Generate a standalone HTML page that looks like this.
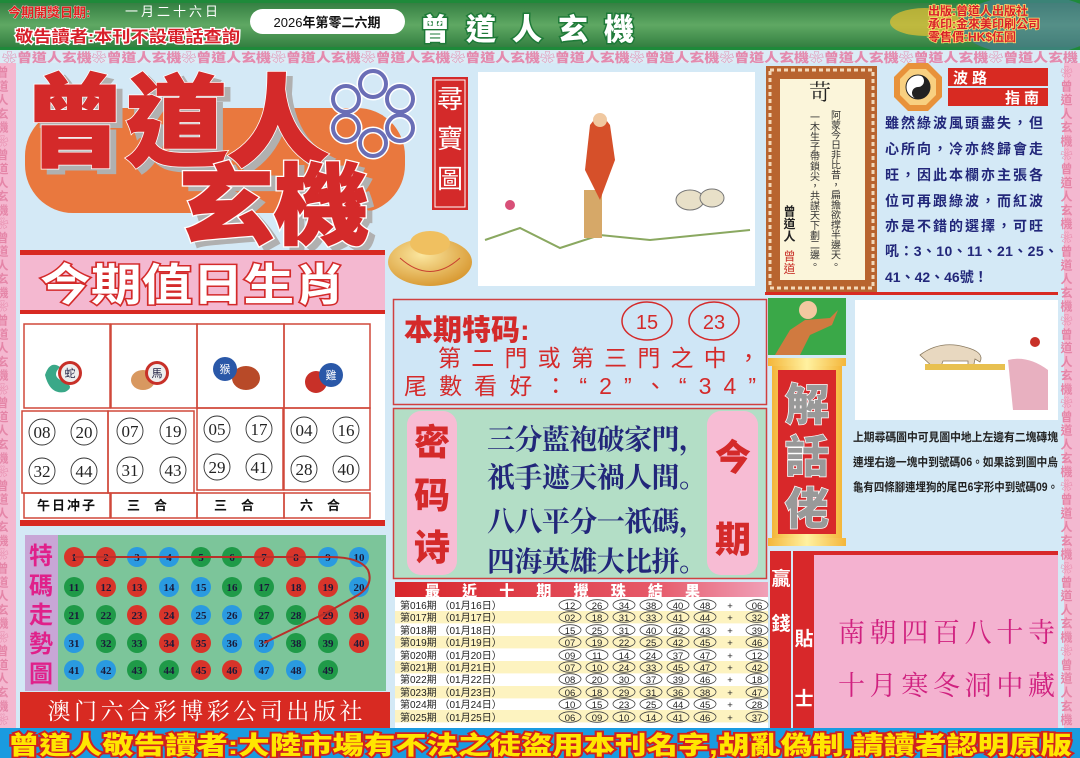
<!DOCTYPE html>
<html><head><meta charset="utf-8">
<style>
html,body{margin:0;padding:0;width:1080px;height:758px;overflow:hidden;background:#d4e9f6}
svg{display:block;font-family:"Liberation Sans","Noto Sans CJK TC","Noto Sans CJK SC",sans-serif}
.r{fill:#d8342a}.b{fill:#2a9ae0}.g{fill:#1f9a48}
.bn{font-family:"Liberation Serif","Noto Serif CJK SC",serif;font-size:11px;font-weight:bold;fill:#1a1a3a;text-anchor:middle}
.lt{font-size:10px;fill:#222}
.le{fill:none;stroke:#444;stroke-width:0.8}
.ln{font-size:9.5px;fill:#222;text-anchor:middle}
.nc{fill:#fff;stroke:#333;stroke-width:0.9}
.nt{font-family:"Liberation Serif",serif;font-size:17px;fill:#222;text-anchor:middle}
.cell{fill:none;stroke:#d0483a;stroke-width:1.5}
.vt{writing-mode:tb;font-size:10px;fill:#333;letter-spacing:0.5px}
</style></head><body>
<svg width="1080" height="758" viewBox="0 0 1080 758" xmlns="http://www.w3.org/2000/svg">
<defs>
<linearGradient id="hg" x1="0" y1="0" x2="0" y2="1"><stop offset="0" stop-color="#2f7a3e"/><stop offset="0.5" stop-color="#5fa863"/><stop offset="1" stop-color="#2d7a3c"/></linearGradient>
<linearGradient id="tg" x1="0" y1="0" x2="1" y2="0"><stop offset="0" stop-color="#d8252a"/><stop offset="0.7" stop-color="#e65a6a"/><stop offset="1" stop-color="#f0a0b8"/></linearGradient>
<radialGradient id="gold" cx="0.4" cy="0.35" r="0.7"><stop offset="0" stop-color="#fbe7a0"/><stop offset="1" stop-color="#d7962e"/></radialGradient>
<linearGradient id="pil" x1="0" y1="0" x2="1" y2="0"><stop offset="0" stop-color="#f4b63a"/><stop offset="0.5" stop-color="#fff1a0"/><stop offset="1" stop-color="#f4b63a"/></linearGradient>
</defs>

<rect x="0" y="0" width="1080" height="758" fill="#d4e9f6"/>

<!-- header -->
<rect x="0" y="0" width="1080" height="50" fill="url(#hg)"/>
<rect x="0" y="0" width="1080" height="3" fill="#1e8a3a"/>
<rect x="0" y="47" width="1080" height="3" fill="#1e8a3a"/>
<ellipse cx="1030" cy="25" rx="70" ry="30" fill="#4f7fa0" opacity="0.6"/>
<ellipse cx="925" cy="22" rx="35" ry="14" fill="#e8c030" opacity="0.7"/>
<text x="8" y="17" font-size="13" font-weight="bold" fill="#e02020" stroke="#fff" stroke-width="0.6" paint-order="stroke">今期開獎日期:</text>
<text x="125" y="16" font-size="13" fill="#fff" letter-spacing="3">一月二十六日</text>
<text x="15" y="42" font-size="16" font-weight="bold" fill="#d8202a" stroke="#fff" stroke-width="2.5" paint-order="stroke" textLength="225" lengthAdjust="spacingAndGlyphs">敬告讀者:本刊不設電話查詢</text>
<rect x="250" y="9" width="155" height="25" rx="12.5" fill="#fff"/>
<text x="327" y="27" font-size="13" fill="#111" text-anchor="middle">2026<tspan font-weight="bold">年第零二六期</tspan></text>
<text x="420" y="40" font-size="30" font-weight="900" fill="#fff" stroke="#1e7a38" stroke-width="3" paint-order="stroke" letter-spacing="16">曾道人玄機</text>
<text x="928" y="15" font-size="12" font-weight="bold" fill="#d8202a" stroke="#ffe070" stroke-width="1.5" paint-order="stroke">出版:曾道人出版社</text>
<text x="928" y="28" font-size="12" font-weight="bold" fill="#d8202a" stroke="#ffe070" stroke-width="1.5" paint-order="stroke">承印:金來美印刷公司</text>
<text x="928" y="41" font-size="12" font-weight="bold" fill="#d8202a" stroke="#ffe070" stroke-width="1.5" paint-order="stroke">零售價:HK$伍圓</text>

<!-- watermark strips -->
<rect x="0" y="50" width="1080" height="13" fill="#dcecf6"/>
<text x="2" y="62" font-size="12.5" fill="#e48aae" font-weight="900" textLength="1076" lengthAdjust="spacingAndGlyphs">❀曾道人玄機❀曾道人玄機❀曾道人玄機❀曾道人玄機❀曾道人玄機❀曾道人玄機❀曾道人玄機❀曾道人玄機❀曾道人玄機❀曾道人玄機❀曾道人玄機❀曾道人玄機</text>
<rect x="0" y="63" width="16" height="667" fill="#f4b8d0"/>
<rect x="1064" y="63" width="16" height="667" fill="#f4b8d0"/>
<text x="2" y="66" class="vt" style="writing-mode:tb;font-size:12px;font-weight:bold;fill:#e586a8" textLength="660" lengthAdjust="spacing">曾道人玄機❀曾道人玄機❀曾道人玄機❀曾道人玄機❀曾道人玄機❀曾道人玄機❀曾道人玄機❀曾道人玄機❀</text>
<text x="1066" y="66" class="vt" style="writing-mode:tb;font-size:12px;font-weight:bold;fill:#e586a8" textLength="660" lengthAdjust="spacing">❀曾道人玄機❀曾道人玄機❀曾道人玄機❀曾道人玄機❀曾道人玄機❀曾道人玄機❀曾道人玄機❀曾道人玄機</text>

<!-- title block -->
<rect x="25" y="108" width="380" height="105" rx="48" fill="#e9783e"/>
<text x="30" y="163" font-size="100" font-weight="900" fill="#b0b0b0" stroke="#b0b0b0" stroke-width="3" textLength="305" lengthAdjust="spacingAndGlyphs">曾道人</text>
<text x="24" y="158" font-size="100" font-weight="900" fill="#d42a2a" stroke="#fff" stroke-width="3" paint-order="stroke" textLength="305" lengthAdjust="spacingAndGlyphs">曾道人</text>
<text x="24" y="158" font-size="100" font-weight="900" fill="#d42a2a" stroke="#d42a2a" stroke-width="1.5" textLength="305" lengthAdjust="spacingAndGlyphs">曾道人</text>
<text x="185" y="242" font-size="88" font-weight="900" fill="#b0b0b0" stroke="#b0b0b0" stroke-width="3" textLength="190" lengthAdjust="spacingAndGlyphs">玄機</text>
<text x="179" y="237" font-size="88" font-weight="900" fill="#d42a2a" stroke="#fff" stroke-width="4" paint-order="stroke" textLength="190" lengthAdjust="spacingAndGlyphs">玄機</text>
<text x="179" y="237" font-size="88" font-weight="900" fill="#d42a2a" stroke="#d42a2a" stroke-width="1.5" textLength="190" lengthAdjust="spacingAndGlyphs">玄機</text>
<g fill="none" stroke="#fff" stroke-width="7">
<circle cx="373" cy="84" r="13"/><circle cx="400" cy="99" r="13"/><circle cx="400" cy="128" r="13"/><circle cx="373" cy="143" r="13"/><circle cx="346" cy="128" r="13"/><circle cx="346" cy="99" r="13"/></g>
<g fill="none" stroke="#6a6eb6" stroke-width="4">
<circle cx="373" cy="84" r="13"/><circle cx="400" cy="99" r="13"/><circle cx="400" cy="128" r="13"/><circle cx="373" cy="143" r="13"/><circle cx="346" cy="128" r="13"/><circle cx="346" cy="99" r="13"/></g>
<rect x="432" y="77" width="36" height="133" fill="#d42a2a"/>
<rect x="435" y="80" width="30" height="127" fill="none" stroke="#fff" stroke-width="1"/>
<text x="450" y="108" font-size="26" fill="#fff" text-anchor="middle">尋</text>
<text x="450" y="148" font-size="26" fill="#fff" text-anchor="middle">寶</text>
<text x="450" y="188" font-size="26" fill="#fff" text-anchor="middle">圖</text>
<ellipse cx="430" cy="262" rx="42" ry="24" fill="url(#gold)"/>
<ellipse cx="430" cy="243" rx="20" ry="12" fill="#f0c060"/>
<path d="M400 258 Q430 285 460 258" fill="none" stroke="#c84030" stroke-width="1"/>

<!-- picture 1 -->
<rect x="478" y="72" width="277" height="214" fill="#fff"/>
<path d="M485 240 L520 228 L560 248 L600 235 L650 240 L750 230" stroke="#8aa860" stroke-width="2" fill="none"/>
<rect x="584" y="190" width="18" height="48" fill="#d6a868"/>
<path d="M590 125 q10 -15 20 0 l5 35 l-15 40 l-15 -30 z" fill="#d6502a"/>
<circle cx="600" cy="120" r="7" fill="#f0c8a0"/>
<ellipse cx="690" cy="200" rx="14" ry="10" fill="#e8e0c8" stroke="#777"/>
<ellipse cx="712" cy="198" rx="12" ry="9" fill="#e8e0c8" stroke="#777"/>
<circle cx="510" cy="205" r="5" fill="#d85078"/>

<!-- 今期值日生肖 -->
<rect x="20" y="250" width="365" height="5" fill="#d82a22"/>
<rect x="20" y="255" width="365" height="55" fill="#f4b8d0"/>
<text x="40" y="300" font-size="44" font-weight="bold" fill="#fff" stroke="#d42a2a" stroke-width="3" paint-order="stroke" textLength="305" lengthAdjust="spacingAndGlyphs">今期值日生肖</text>
<rect x="20" y="310" width="365" height="4" fill="#d82a22"/>
<rect x="20" y="314" width="365" height="206" fill="#fff"/>
<rect x="24" y="324" width="86" height="84" class="cell"/><rect x="111" y="324" width="86" height="84" class="cell"/><rect x="197" y="324" width="87" height="84" class="cell"/><rect x="284" y="324" width="86" height="84" class="cell"/>
<rect x="22" y="411" width="86" height="82" class="cell"/><rect x="108" y="411" width="86" height="82" class="cell"/><rect x="197" y="408" width="86" height="82" class="cell"/><rect x="284" y="408" width="86" height="82" class="cell"/>
<rect x="24" y="493" width="86" height="25" class="cell"/><rect x="111" y="493" width="86" height="25" class="cell"/><rect x="197" y="493" width="87" height="25" class="cell"/><rect x="284" y="493" width="86" height="25" class="cell"/>
<path d="M45 375 q5 -15 15 -8 q-10 10 5 15 q10 5 0 10 q-15 3 -20 -17z" fill="#3aa888"/>
<circle cx="70" cy="373" r="12" fill="#c83028"/><circle cx="70" cy="373" r="9" fill="#eee"/><text x="70" y="377" font-size="11" text-anchor="middle" fill="#224">蛇</text>
<ellipse cx="143" cy="380" rx="12" ry="10" fill="#d89860"/>
<circle cx="157" cy="373" r="12" fill="#c83028"/><circle cx="157" cy="373" r="9" fill="#eee"/><text x="157" y="377" font-size="11" text-anchor="middle" fill="#224">馬</text>
<ellipse cx="246" cy="378" rx="14" ry="12" fill="#b84a28"/>
<circle cx="225" cy="369" r="12" fill="#2a58a8"/><text x="225" y="373" font-size="11" text-anchor="middle" fill="#fff">猴</text>
<ellipse cx="316" cy="382" rx="11" ry="11" fill="#c83028"/>
<circle cx="331" cy="375" r="12" fill="#2a58a8"/><text x="331" y="379" font-size="11" text-anchor="middle" fill="#fff">雞</text>
<g>
<circle cx="42" cy="432" r="13" class="nc"/><text x="42" y="438" class="nt">08</text>
<circle cx="84" cy="432" r="13" class="nc"/><text x="84" y="438" class="nt">20</text>
<circle cx="42" cy="471" r="13" class="nc"/><text x="42" y="477" class="nt">32</text>
<circle cx="84" cy="471" r="13" class="nc"/><text x="84" y="477" class="nt">44</text>
<circle cx="130" cy="431" r="13" class="nc"/><text x="130" y="437" class="nt">07</text>
<circle cx="173" cy="431" r="13" class="nc"/><text x="173" y="437" class="nt">19</text>
<circle cx="130" cy="470" r="13" class="nc"/><text x="130" y="476" class="nt">31</text>
<circle cx="173" cy="470" r="13" class="nc"/><text x="173" y="476" class="nt">43</text>
<circle cx="217" cy="429" r="13" class="nc"/><text x="217" y="435" class="nt">05</text>
<circle cx="259" cy="429" r="13" class="nc"/><text x="259" y="435" class="nt">17</text>
<circle cx="217" cy="467" r="13" class="nc"/><text x="217" y="473" class="nt">29</text>
<circle cx="259" cy="467" r="13" class="nc"/><text x="259" y="473" class="nt">41</text>
<circle cx="304" cy="430" r="13" class="nc"/><text x="304" y="436" class="nt">04</text>
<circle cx="346" cy="430" r="13" class="nc"/><text x="346" y="436" class="nt">16</text>
<circle cx="304" cy="469" r="13" class="nc"/><text x="304" y="475" class="nt">28</text>
<circle cx="346" cy="469" r="13" class="nc"/><text x="346" y="475" class="nt">40</text>
</g>
<g font-size="13" font-weight="bold" fill="#111" text-anchor="middle">
<text x="67" y="510" letter-spacing="2">午日冲子</text><text x="154" y="510" letter-spacing="14">三合</text><text x="241" y="510" letter-spacing="14">三合</text><text x="327" y="510" letter-spacing="14">六合</text></g>
<rect x="20" y="520" width="365" height="6" fill="#d82a22"/>

<!-- 特碼走勢圖 -->
<rect x="25" y="535" width="361" height="156" fill="#7cc59a"/>
<rect x="25" y="535" width="33" height="156" fill="#c8a6d6"/>
<g font-size="24" font-weight="bold" fill="#e0208a" text-anchor="middle">
<text x="41" y="564">特</text><text x="41" y="594">碼</text><text x="41" y="623">走</text><text x="41" y="652">勢</text><text x="41" y="682">圖</text></g>
<g>
<circle cx="74" cy="557" r="10" class="r"/><circle cx="106" cy="557" r="10" class="r"/><circle cx="137" cy="557" r="10" class="b"/><circle cx="169" cy="557" r="10" class="b"/><circle cx="201" cy="557" r="10" class="g"/><circle cx="232" cy="557" r="10" class="g"/><circle cx="264" cy="557" r="10" class="r"/><circle cx="296" cy="557" r="10" class="r"/><circle cx="328" cy="557" r="10" class="b"/><circle cx="359" cy="557" r="10" class="b"/>
<circle cx="74" cy="587" r="10" class="g"/><circle cx="106" cy="587" r="10" class="r"/><circle cx="137" cy="587" r="10" class="r"/><circle cx="169" cy="587" r="10" class="b"/><circle cx="201" cy="587" r="10" class="b"/><circle cx="232" cy="587" r="10" class="g"/><circle cx="264" cy="587" r="10" class="g"/><circle cx="296" cy="587" r="10" class="r"/><circle cx="328" cy="587" r="10" class="r"/><circle cx="359" cy="587" r="10" class="b"/>
<circle cx="74" cy="615" r="10" class="g"/><circle cx="106" cy="615" r="10" class="g"/><circle cx="137" cy="615" r="10" class="r"/><circle cx="169" cy="615" r="10" class="r"/><circle cx="201" cy="615" r="10" class="b"/><circle cx="232" cy="615" r="10" class="b"/><circle cx="264" cy="615" r="10" class="g"/><circle cx="296" cy="615" r="10" class="g"/><circle cx="328" cy="615" r="10" class="r"/><circle cx="359" cy="615" r="10" class="r"/>
<circle cx="74" cy="643" r="10" class="b"/><circle cx="106" cy="643" r="10" class="g"/><circle cx="137" cy="643" r="10" class="g"/><circle cx="169" cy="643" r="10" class="r"/><circle cx="201" cy="643" r="10" class="r"/><circle cx="232" cy="643" r="10" class="b"/><circle cx="264" cy="643" r="10" class="b"/><circle cx="296" cy="643" r="10" class="g"/><circle cx="328" cy="643" r="10" class="g"/><circle cx="359" cy="643" r="10" class="r"/>
<circle cx="74" cy="670" r="10" class="b"/><circle cx="106" cy="670" r="10" class="b"/><circle cx="137" cy="670" r="10" class="g"/><circle cx="169" cy="670" r="10" class="g"/><circle cx="201" cy="670" r="10" class="r"/><circle cx="232" cy="670" r="10" class="r"/><circle cx="264" cy="670" r="10" class="b"/><circle cx="296" cy="670" r="10" class="b"/><circle cx="328" cy="670" r="10" class="g"/>
</g>
<g class="bn">
<text x="74" y="561" class="bn">1</text><text x="106" y="561" class="bn">2</text><text x="137" y="561" class="bn">3</text><text x="169" y="561" class="bn">4</text><text x="201" y="561" class="bn">5</text><text x="232" y="561" class="bn">6</text><text x="264" y="561" class="bn">7</text><text x="296" y="561" class="bn">8</text><text x="328" y="561" class="bn">9</text><text x="359" y="561" class="bn">10</text>
<text x="74" y="591" class="bn">11</text><text x="106" y="591" class="bn">12</text><text x="137" y="591" class="bn">13</text><text x="169" y="591" class="bn">14</text><text x="201" y="591" class="bn">15</text><text x="232" y="591" class="bn">16</text><text x="264" y="591" class="bn">17</text><text x="296" y="591" class="bn">18</text><text x="328" y="591" class="bn">19</text><text x="359" y="591" class="bn">20</text>
<text x="74" y="619" class="bn">21</text><text x="106" y="619" class="bn">22</text><text x="137" y="619" class="bn">23</text><text x="169" y="619" class="bn">24</text><text x="201" y="619" class="bn">25</text><text x="232" y="619" class="bn">26</text><text x="264" y="619" class="bn">27</text><text x="296" y="619" class="bn">28</text><text x="328" y="619" class="bn">29</text><text x="359" y="619" class="bn">30</text>
<text x="74" y="647" class="bn">31</text><text x="106" y="647" class="bn">32</text><text x="137" y="647" class="bn">33</text><text x="169" y="647" class="bn">34</text><text x="201" y="647" class="bn">35</text><text x="232" y="647" class="bn">36</text><text x="264" y="647" class="bn">37</text><text x="296" y="647" class="bn">38</text><text x="328" y="647" class="bn">39</text><text x="359" y="647" class="bn">40</text>
<text x="74" y="674" class="bn">41</text><text x="106" y="674" class="bn">42</text><text x="137" y="674" class="bn">43</text><text x="169" y="674" class="bn">44</text><text x="201" y="674" class="bn">45</text><text x="232" y="674" class="bn">46</text><text x="264" y="674" class="bn">47</text><text x="296" y="674" class="bn">48</text><text x="328" y="674" class="bn">49</text>
</g>
<path d="M74 557 L330 557 Q360 557 368 570 Q374 585 358 595 L328 612 L264 643" fill="none" stroke="#b8302a" stroke-width="2"/>

<rect x="20" y="692" width="370" height="36" fill="#d82a22"/>
<text x="205" y="719" font-size="23" fill="#fff" text-anchor="middle" font-family="Liberation Serif,Noto Serif CJK SC,serif" textLength="315" lengthAdjust="spacing">澳门六合彩博彩公司出版社</text>

<!-- 本期特码 -->
<rect x="393.5" y="299.5" width="373" height="105" fill="#cfe6f6" stroke="#d04040" stroke-width="1.5"/>
<text x="404" y="340" font-size="29" font-weight="900" fill="#d42a2a">本期特码:</text>
<ellipse cx="647" cy="321" rx="25" ry="19" fill="none" stroke="#d42a2a" stroke-width="1.5"/>
<ellipse cx="714" cy="321" rx="25" ry="19" fill="none" stroke="#d42a2a" stroke-width="1.5"/>
<text x="647" y="329" font-size="20" fill="#d42a2a" text-anchor="middle">15</text>
<text x="714" y="329" font-size="20" fill="#d42a2a" text-anchor="middle">23</text>
<text x="438" y="366" font-size="23" fill="#d42a2a" textLength="322" lengthAdjust="spacing">第二門或第三門之中，</text>
<text x="404" y="394" font-size="23" fill="#d42a2a" textLength="352" lengthAdjust="spacing">尾數看好：“2”、“34”</text>

<!-- 密码诗 -->
<rect x="393.5" y="408.5" width="373" height="170" fill="#b3dec6" stroke="#d04040" stroke-width="1.5"/>
<rect x="407" y="411" width="50" height="164" rx="14" fill="#f7bcd4"/>
<rect x="707" y="411" width="51" height="164" rx="14" fill="#f7bcd4"/>
<g font-size="36" font-weight="900" fill="#d42a2a" text-anchor="middle">
<text x="432" y="455">密</text><text x="432" y="508">码</text><text x="432" y="560">诗</text>
<text x="733" y="470">今</text><text x="733" y="552">期</text></g>
<g font-size="28" font-weight="bold" fill="#22277a" font-family="Noto Serif CJK SC,serif">
<text x="487" y="449" textLength="220" lengthAdjust="spacing">三分藍袍破家門，</text>
<text x="487" y="487" textLength="220" lengthAdjust="spacing">祇手遮天禍人間。</text>
<text x="487" y="531" textLength="220" lengthAdjust="spacing">八八平分一祇碼，</text>
<text x="487" y="571" textLength="220" lengthAdjust="spacing">四海英雄大比拼。</text></g>

<!-- 最近十期 -->
<rect x="395" y="582" width="373" height="15" fill="url(#tg)"/>
<text x="425" y="596" font-size="15" font-weight="900" fill="#fff" textLength="275" lengthAdjust="spacing">最近十期攪珠結果</text>
<rect x="395" y="597" width="373" height="131" fill="#fff"/>
<g fill="#fdf3c0">
<rect x="395" y="611" width="373" height="12.4"/><rect x="395" y="636" width="373" height="12.4"/><rect x="395" y="661" width="373" height="12.4"/><rect x="395" y="686" width="373" height="12.4"/><rect x="395" y="710" width="373" height="12.4"/></g>
<g>
<text x="400" y="609" class="lt">第016期 （01月16日）</text>
<text x="400" y="621" class="lt">第017期 （01月17日）</text>
<text x="400" y="634" class="lt">第018期 （01月18日）</text>
<text x="400" y="646" class="lt">第019期 （01月19日）</text>
<text x="400" y="659" class="lt">第020期 （01月20日）</text>
<text x="400" y="671" class="lt">第021期 （01月21日）</text>
<text x="400" y="683" class="lt">第022期 （01月22日）</text>
<text x="400" y="696" class="lt">第023期 （01月23日）</text>
<text x="400" y="708" class="lt">第024期 （01月24日）</text>
<text x="400" y="721" class="lt">第025期 （01月25日）</text>
</g>
<g class="le">
<ellipse cx="570" cy="605" rx="11" ry="5.3"/><ellipse cx="597" cy="605" rx="11" ry="5.3"/><ellipse cx="624" cy="605" rx="11" ry="5.3"/><ellipse cx="651" cy="605" rx="11" ry="5.3"/><ellipse cx="678" cy="605" rx="11" ry="5.3"/><ellipse cx="705" cy="605" rx="11" ry="5.3"/><ellipse cx="757" cy="605" rx="11" ry="5.3"/>
<ellipse cx="570" cy="617" rx="11" ry="5.3"/><ellipse cx="597" cy="617" rx="11" ry="5.3"/><ellipse cx="624" cy="617" rx="11" ry="5.3"/><ellipse cx="651" cy="617" rx="11" ry="5.3"/><ellipse cx="678" cy="617" rx="11" ry="5.3"/><ellipse cx="705" cy="617" rx="11" ry="5.3"/><ellipse cx="757" cy="617" rx="11" ry="5.3"/>
<ellipse cx="570" cy="630" rx="11" ry="5.3"/><ellipse cx="597" cy="630" rx="11" ry="5.3"/><ellipse cx="624" cy="630" rx="11" ry="5.3"/><ellipse cx="651" cy="630" rx="11" ry="5.3"/><ellipse cx="678" cy="630" rx="11" ry="5.3"/><ellipse cx="705" cy="630" rx="11" ry="5.3"/><ellipse cx="757" cy="630" rx="11" ry="5.3"/>
<ellipse cx="570" cy="642" rx="11" ry="5.3"/><ellipse cx="597" cy="642" rx="11" ry="5.3"/><ellipse cx="624" cy="642" rx="11" ry="5.3"/><ellipse cx="651" cy="642" rx="11" ry="5.3"/><ellipse cx="678" cy="642" rx="11" ry="5.3"/><ellipse cx="705" cy="642" rx="11" ry="5.3"/><ellipse cx="757" cy="642" rx="11" ry="5.3"/>
<ellipse cx="570" cy="655" rx="11" ry="5.3"/><ellipse cx="597" cy="655" rx="11" ry="5.3"/><ellipse cx="624" cy="655" rx="11" ry="5.3"/><ellipse cx="651" cy="655" rx="11" ry="5.3"/><ellipse cx="678" cy="655" rx="11" ry="5.3"/><ellipse cx="705" cy="655" rx="11" ry="5.3"/><ellipse cx="757" cy="655" rx="11" ry="5.3"/>
<ellipse cx="570" cy="667" rx="11" ry="5.3"/><ellipse cx="597" cy="667" rx="11" ry="5.3"/><ellipse cx="624" cy="667" rx="11" ry="5.3"/><ellipse cx="651" cy="667" rx="11" ry="5.3"/><ellipse cx="678" cy="667" rx="11" ry="5.3"/><ellipse cx="705" cy="667" rx="11" ry="5.3"/><ellipse cx="757" cy="667" rx="11" ry="5.3"/>
<ellipse cx="570" cy="679" rx="11" ry="5.3"/><ellipse cx="597" cy="679" rx="11" ry="5.3"/><ellipse cx="624" cy="679" rx="11" ry="5.3"/><ellipse cx="651" cy="679" rx="11" ry="5.3"/><ellipse cx="678" cy="679" rx="11" ry="5.3"/><ellipse cx="705" cy="679" rx="11" ry="5.3"/><ellipse cx="757" cy="679" rx="11" ry="5.3"/>
<ellipse cx="570" cy="692" rx="11" ry="5.3"/><ellipse cx="597" cy="692" rx="11" ry="5.3"/><ellipse cx="624" cy="692" rx="11" ry="5.3"/><ellipse cx="651" cy="692" rx="11" ry="5.3"/><ellipse cx="678" cy="692" rx="11" ry="5.3"/><ellipse cx="705" cy="692" rx="11" ry="5.3"/><ellipse cx="757" cy="692" rx="11" ry="5.3"/>
<ellipse cx="570" cy="704" rx="11" ry="5.3"/><ellipse cx="597" cy="704" rx="11" ry="5.3"/><ellipse cx="624" cy="704" rx="11" ry="5.3"/><ellipse cx="651" cy="704" rx="11" ry="5.3"/><ellipse cx="678" cy="704" rx="11" ry="5.3"/><ellipse cx="705" cy="704" rx="11" ry="5.3"/><ellipse cx="757" cy="704" rx="11" ry="5.3"/>
<ellipse cx="570" cy="717" rx="11" ry="5.3"/><ellipse cx="597" cy="717" rx="11" ry="5.3"/><ellipse cx="624" cy="717" rx="11" ry="5.3"/><ellipse cx="651" cy="717" rx="11" ry="5.3"/><ellipse cx="678" cy="717" rx="11" ry="5.3"/><ellipse cx="705" cy="717" rx="11" ry="5.3"/><ellipse cx="757" cy="717" rx="11" ry="5.3"/>
</g>
<g class="ln">
<text x="570" y="609">12</text><text x="597" y="609">26</text><text x="624" y="609">34</text><text x="651" y="609">38</text><text x="678" y="609">40</text><text x="705" y="609">48</text><text x="730" y="609">+</text><text x="757" y="609">06</text>
<text x="570" y="621">02</text><text x="597" y="621">18</text><text x="624" y="621">31</text><text x="651" y="621">33</text><text x="678" y="621">41</text><text x="705" y="621">44</text><text x="730" y="621">+</text><text x="757" y="621">32</text>
<text x="570" y="634">15</text><text x="597" y="634">25</text><text x="624" y="634">31</text><text x="651" y="634">40</text><text x="678" y="634">42</text><text x="705" y="634">43</text><text x="730" y="634">+</text><text x="757" y="634">39</text>
<text x="570" y="646">07</text><text x="597" y="646">19</text><text x="624" y="646">22</text><text x="651" y="646">25</text><text x="678" y="646">42</text><text x="705" y="646">45</text><text x="730" y="646">+</text><text x="757" y="646">46</text>
<text x="570" y="659">09</text><text x="597" y="659">11</text><text x="624" y="659">14</text><text x="651" y="659">24</text><text x="678" y="659">37</text><text x="705" y="659">47</text><text x="730" y="659">+</text><text x="757" y="659">12</text>
<text x="570" y="671">07</text><text x="597" y="671">10</text><text x="624" y="671">24</text><text x="651" y="671">33</text><text x="678" y="671">45</text><text x="705" y="671">47</text><text x="730" y="671">+</text><text x="757" y="671">42</text>
<text x="570" y="683">08</text><text x="597" y="683">20</text><text x="624" y="683">30</text><text x="651" y="683">37</text><text x="678" y="683">39</text><text x="705" y="683">46</text><text x="730" y="683">+</text><text x="757" y="683">18</text>
<text x="570" y="696">06</text><text x="597" y="696">18</text><text x="624" y="696">29</text><text x="651" y="696">31</text><text x="678" y="696">36</text><text x="705" y="696">38</text><text x="730" y="696">+</text><text x="757" y="696">47</text>
<text x="570" y="708">10</text><text x="597" y="708">15</text><text x="624" y="708">23</text><text x="651" y="708">25</text><text x="678" y="708">44</text><text x="705" y="708">45</text><text x="730" y="708">+</text><text x="757" y="708">28</text>
<text x="570" y="721">06</text><text x="597" y="721">09</text><text x="624" y="721">10</text><text x="651" y="721">14</text><text x="678" y="721">41</text><text x="705" y="721">46</text><text x="730" y="721">+</text><text x="757" y="721">37</text>
</g>

<!-- poem box right -->
<rect x="766" y="66" width="111" height="226" fill="#b8642f"/>
<rect x="770" y="70" width="103" height="218" fill="none" stroke="#f3d8b8" stroke-width="3" stroke-dasharray="4 3"/>
<rect x="780" y="79" width="85" height="201" fill="#fbf5da"/>
<text x="820" y="100" font-size="22" fill="#222" text-anchor="middle" font-family="Noto Serif CJK SC,serif">苛</text>
<text x="834" y="110" class="vt" textLength="160" lengthAdjust="spacing">阿蒙今日非比昔，扁擔欲撑半邊天。</text>
<text x="813" y="112" class="vt" textLength="158" lengthAdjust="spacing">一木生子帶鎖尖，共謀天下劃二邊。</text>
<text x="789" y="205" class="vt" style="font-weight:bold;font-size:12px;fill:#222">曾道人</text>
<text x="789" y="250" class="vt" style="font-size:12px;fill:#c83028">曾道</text>

<!-- 波路指南 -->
<polygon points="908,63 928,63 942,77 942,97 928,111 908,111 894,97 894,77" fill="#e8923a"/>
<polygon points="910,69 926,69 936,79 936,95 926,105 910,105 900,95 900,79" fill="#f8d080"/>
<circle cx="918" cy="87" r="12" fill="#fff" stroke="#222"/>
<path d="M918 75 A12 12 0 0 1 918 99 A6 6 0 0 1 918 87 A6 6 0 0 0 918 75z" fill="#222"/>
<rect x="948" y="68" width="100" height="18" fill="#d82a22"/><rect x="948" y="88" width="100" height="18" fill="#d82a22"/>
<text x="953" y="83" font-size="15" font-weight="bold" fill="#fff" letter-spacing="4">波路</text>
<text x="1043" y="103" font-size="15" font-weight="bold" fill="#fff" letter-spacing="4" text-anchor="end">指南</text>
<g font-size="14" font-weight="bold" fill="#22277a">
<text x="885" y="128" textLength="158" lengthAdjust="spacing">雖然綠波風頭盡失，但</text>
<text x="885" y="154" textLength="158" lengthAdjust="spacing">心所向，冷亦終歸會走</text>
<text x="885" y="180" textLength="158" lengthAdjust="spacing">旺，因此本欄亦主張各</text>
<text x="885" y="206" textLength="158" lengthAdjust="spacing">位可再跟綠波，而紅波</text>
<text x="885" y="231" textLength="158" lengthAdjust="spacing">亦是不錯的選擇，可旺</text>
<text x="885" y="256" textLength="173" lengthAdjust="spacing">吼：3、10、11、21、25、</text>
<text x="885" y="282">41、42、46號！</text></g>
<rect x="765" y="292" width="293" height="3" fill="#d82a22"/>

<!-- 解話佬 -->
<rect x="768" y="298" width="78" height="57" fill="#3aa848"/>
<path d="M775 355 L790 330 L805 320 L830 318 L838 310 L832 325 L810 335 L800 355z" fill="#d07a40"/>
<circle cx="808" cy="310" r="9" fill="#f3c8a0"/>
<rect x="768" y="358" width="78" height="8" fill="url(#pil)"/>
<rect x="768" y="538" width="78" height="8" fill="url(#pil)"/>
<rect x="772" y="366" width="70" height="172" fill="url(#pil)"/>
<rect x="778" y="370" width="58" height="164" fill="#d8282a"/>
<g font-size="44" font-weight="900" fill="#999" stroke="#fff" stroke-width="1.5" paint-order="stroke" text-anchor="middle">
<text x="807" y="420">解</text><text x="807" y="472">話</text><text x="807" y="524">佬</text></g>
<rect x="855" y="300" width="203" height="120" fill="#fff"/>
<path d="M920 355 q20 -15 45 -8 q20 5 15 15 l-5 -3 l-2 10 l-5 0 l0 -8 l-25 0 l-3 8 l-5 0 z" fill="#e8d8c0" stroke="#8a7a60" stroke-width="0.8"/>
<rect x="925" y="364" width="80" height="6" fill="#e8c050"/>
<path d="M1008 360 q20 -5 40 10 l0 40 l-35 0 z" fill="#e8b0c0"/>
<circle cx="1035" cy="342" r="5" fill="#c83028"/>
<g font-size="11.5" font-weight="bold" fill="#222">
<text x="853" y="441" textLength="205" lengthAdjust="spacingAndGlyphs">上期尋碼圖中可見圖中地上左邊有二塊磚塊</text>
<text x="853" y="466" textLength="205" lengthAdjust="spacingAndGlyphs">連埋右邊一塊中到號碼06。如果諗到圖中烏</text>
<text x="853" y="491" textLength="205" lengthAdjust="spacingAndGlyphs">龜有四條腳連埋狗的尾巴6字形中到號碼09。</text></g>

<!-- 贏錢貼士 -->
<rect x="770" y="551" width="21" height="177" fill="#d8282a"/>
<rect x="793" y="551" width="21" height="177" fill="#d8282a"/>
<g font-size="19" font-weight="bold" fill="#fff" text-anchor="middle">
<text x="781" y="585">贏</text><text x="781" y="630">錢</text>
<text x="804" y="645">貼</text><text x="804" y="705">士</text></g>
<rect x="814" y="551" width="244" height="4" fill="#d8282a"/>
<rect x="814" y="555" width="244" height="173" fill="#f4b2d0"/>
<g font-size="27" fill="#d0207f" font-family="Noto Serif CJK SC,serif">
<text x="838" y="642" textLength="217" lengthAdjust="spacing">南朝四百八十寺</text>
<text x="838" y="695" textLength="217" lengthAdjust="spacing">十月寒冬洞中藏</text></g>

<!-- bottom banner -->
<rect x="0" y="728" width="1080" height="30" fill="#1a9be0"/>
<text x="8" y="754" font-size="25" font-weight="900" fill="#ffe600" stroke="#d02020" stroke-width="3.5" paint-order="stroke" textLength="1064" lengthAdjust="spacingAndGlyphs">曾道人敬告讀者:大陸市場有不法之徒盜用本刊名字,胡亂偽制,請讀者認明原版</text>
</svg>
</body></html>
